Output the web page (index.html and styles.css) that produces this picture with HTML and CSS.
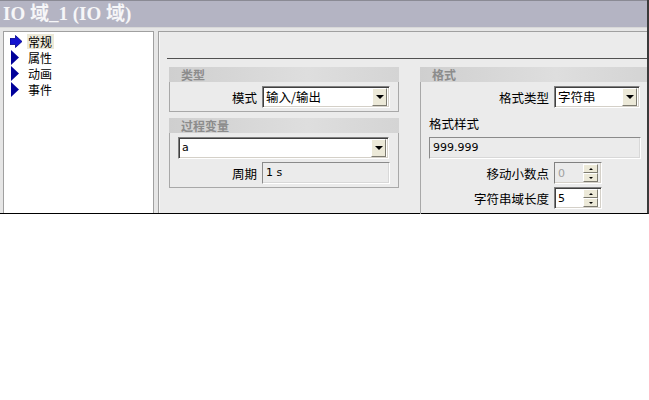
FILE: index.html
```html
<!DOCTYPE html>
<html lang="zh">
<head>
<meta charset="utf-8">
<title>IO 域_1</title>
<link rel="stylesheet" href="styles.css">
</head>
<body>
<div class="window">
  <div class="titlebar">IO 域_1 (IO 域)</div>
  <div class="content">
    <div class="tree">
      <div class="tree-item">
        <svg class="ti" width="13" height="15" viewBox="0 0 13 15"><polygon points="0,4.5 5.5,4.5 5.5,1.5 12,7.5 5.5,13.5 5.5,10.5 0,10.5" fill="#1212d0" stroke="#00008a" stroke-width="0.8"/></svg>
        <span class="tlabel selected">常规</span>
      </div>
      <div class="tree-item">
        <svg class="ti" width="13" height="15" viewBox="0 0 13 15"><polygon points="1,0 9,7.5 1,15" fill="#00009a"/></svg>
        <span class="tlabel">属性</span>
      </div>
      <div class="tree-item">
        <svg class="ti" width="13" height="15" viewBox="0 0 13 15"><polygon points="1,0 9,7.5 1,15" fill="#00009a"/></svg>
        <span class="tlabel">动画</span>
      </div>
      <div class="tree-item">
        <svg class="ti" width="13" height="15" viewBox="0 0 13 15"><polygon points="1,0 9,7.5 1,15" fill="#00009a"/></svg>
        <span class="tlabel">事件</span>
      </div>
    </div>
    <div class="props">
      <div class="props-top"></div>
      <div class="groups">
        <div class="col-left">
          <div class="group">
            <div class="ghead">类型</div>
            <div class="gbox type-box">
              <div class="row">
                <span class="lbl lbl-type">模式</span>
                <div class="select sel-mode"><span class="val">输入/输出</span><span class="dd"><i class="tri"></i></span></div>
              </div>
            </div>
          </div>
          <div class="group">
            <div class="ghead">过程变量</div>
            <div class="gbox pv-box">
              <div class="select sel-var"><span class="val">a</span><span class="dd"><i class="tri"></i></span></div>
              <div class="row">
                <span class="lbl lbl-type">周期</span>
                <div class="ro ro-cycle">1 s</div>
              </div>
            </div>
          </div>
        </div>
        <div class="group group-format">
          <div class="ghead">格式</div>
          <div class="gbox fmt-box">
            <div class="row">
              <span class="lbl lbl-fmt">格式类型</span>
              <div class="select sel-fmt"><span class="val">字符串</span><span class="dd"><i class="tri"></i></span></div>
            </div>
            <div class="fmt-sample-label">格式样式</div>
            <div class="ro ro-sample">999.999</div>
            <div class="row">
              <span class="lbl lbl-fmt">移动小数点</span>
              <div class="spin disabled"><span class="sval">0</span><span class="sbtns"><span class="sb"><i class="up"></i></span><span class="sb"><i class="down"></i></span></span></div>
            </div>
            <div class="row">
              <span class="lbl lbl-fmt">字符串域长度</span>
              <div class="spin"><span class="sval">5</span><span class="sbtns"><span class="sb"><i class="up"></i></span><span class="sb"><i class="down"></i></span></span></div>
            </div>
          </div>
        </div>
      </div>
    </div>
  </div>
</div>
</body>
</html>
```

FILE: styles.css
```css
* { box-sizing: border-box; }
body {
  margin: 0;
  background: #ffffff;
  font-family: "Noto Sans CJK SC", "Liberation Sans", sans-serif;
  font-size: 12px;
  color: #000;
}
.window {
  width: 649px;
  border-right: 2px solid #3a3a3a;
  border-bottom: 1px solid #000;
}
.titlebar {
  height: 28px;
  background: #b4b4c3;
  border-top: 1px solid #8a8a94;
  border-bottom: 1px solid #d8d8d8;
  color: #f6f6f8;
  font-family: "Liberation Serif", "Noto Sans CJK SC", serif;
  font-weight: bold;
  font-size: 19px;
  line-height: 25px;
  padding-left: 3px;
  white-space: nowrap;
}
.content {
  display: flex;
  gap: 4px;
  height: 185px;
  padding: 3px 0 0 3px;
  background: #e6e6e6;
}
.tree {
  width: 151px;
  background: #fff;
  border: 1px solid #a0a0a0;
  border-bottom: none;
  padding: 1px 0 0 6px;
}
.tree-item {
  display: flex;
  align-items: center;
  height: 16px;
  overflow: hidden;
}
.ti { flex: none; margin-right: 4px; }
.tlabel {
  font-size: 12px;
  line-height: 15px;
  height: 15px;
  padding: 0 2px 0 1px;
}
.tlabel.selected { background: #ece9d8; }
.props {
  flex: 1;
  background: #ebebeb;
  border: 1px solid #a0a0a0;
  border-bottom: none;
  border-right: none;
  box-shadow: inset 1px 0 0 #f6f6f6;
  padding-left: 8px;
}
.props-top {
  height: 27px;
  border-bottom: 1px solid #505050;
}
.groups {
  display: flex;
  gap: 21px;
  padding: 8px 0 0 2px;
}
.col-left {
  width: 230px;
  display: flex;
  flex-direction: column;
  gap: 6px;
}
.group { display: flex; flex-direction: column; }
.group-format { flex: 1; }
.ghead {
  height: 15px;
  background: linear-gradient(to right, #cfcfcf, #dedede 60%, #d4d4d4);
  color: #8c8c8c;
  font-weight: bold;
  font-size: 12px;
  line-height: 15px;
  padding-left: 12px;
}
.gbox {
  border: 1px solid #a8a8a8;
  border-top: none;
}
.type-box { height: 30px; padding-top: 4px; }
.pv-box { height: 55px; padding: 4px 0 0 8px; }
.fmt-box { height: 132px; padding: 4px 0 0 8px; border-right: none; border-bottom: none; }
.row {
  display: flex;
  align-items: center;
  gap: 5px;
}
.pv-box .row { margin-top: 3px; margin-left: -8px; }
.fmt-box .row { margin-left: -8px; }
.fmt-box .row + .row { margin-top: 3px; }
.lbl { text-align: right; white-space: nowrap; font-size: 12.5px; }
.lbl-type { width: 87px; }
.lbl-fmt { width: 128px; }
.select {
  display: flex;
  align-items: center;
  height: 22px;
  background: #fff;
  border: 1px solid;
  border-color: #808080 #ffffff #ffffff #808080;
  box-shadow: inset 1px 1px 0 #404040, inset -1px -1px 0 #d4d0c8;
  padding: 2px 2px 2px 3px;
}
.select .val { flex: 1; white-space: nowrap; line-height: 16px; }
.sel-mode { width: 128px; }
.sel-var { width: 211px; }
.sel-fmt { width: 86px; }
.dd {
  width: 15px;
  height: 18px;
  background: #ece9d8;
  border: 1px solid;
  border-color: #ffffff #7d7b70 #7d7b70 #ffffff;
  display: flex;
  align-items: center;
  justify-content: center;
}
.tri {
  width: 0; height: 0;
  border-left: 4px solid transparent;
  border-right: 4px solid transparent;
  border-top: 4px solid #000;
}
.ro {
  height: 22px;
  background: #ebebeb;
  border: 1px solid;
  border-color: #8a8a8a #ffffff #ffffff #8a8a8a;
  box-shadow: inset -1px -1px 0 #d8d8d8;
  padding-left: 3px;
  line-height: 20px;
  font-family: "DejaVu Sans", sans-serif;
  font-size: 11px;
}
.ro-cycle { width: 128px; }
.ro-sample { width: 212px; margin: 5px 0 3px; }
.fmt-sample-label { margin-top: 7px; line-height: 17px; font-size: 12.5px; }
.sel-mode .val, .sel-fmt .val { font-size: 12.5px; }
.sel-var .val { font-family: "DejaVu Sans", sans-serif; font-size: 11px; }
.spin {
  width: 48px;
  height: 22px;
  display: flex;
  align-items: center;
  background: #fff;
  border: 1px solid;
  border-color: #808080 #ffffff #ffffff #808080;
  box-shadow: inset 1px 1px 0 #404040, inset -1px -1px 0 #d4d0c8;
  padding: 2px 2px 2px 3px;
}
.spin.disabled {
  background: #ebebeb;
  box-shadow: inset -1px -1px 0 #d4d0c8;
  color: #a0a0a0;
}
.sval { flex: 1; font-family: "DejaVu Sans", sans-serif; font-size: 11px; }
.sbtns { display: flex; flex-direction: column; margin-right: 1px; }
.sb {
  width: 15px;
  height: 9px;
  background: #ece9d8;
  border: 1px solid;
  border-color: #ffffff #7d7b70 #7d7b70 #ffffff;
  display: flex;
  align-items: center;
  justify-content: center;
}
.up {
  width: 0; height: 0;
  border-left: 2px solid transparent;
  border-right: 2px solid transparent;
  border-bottom: 2px solid #000;
}
.down {
  width: 0; height: 0;
  border-left: 2px solid transparent;
  border-right: 2px solid transparent;
  border-top: 2px solid #000;
}
```
